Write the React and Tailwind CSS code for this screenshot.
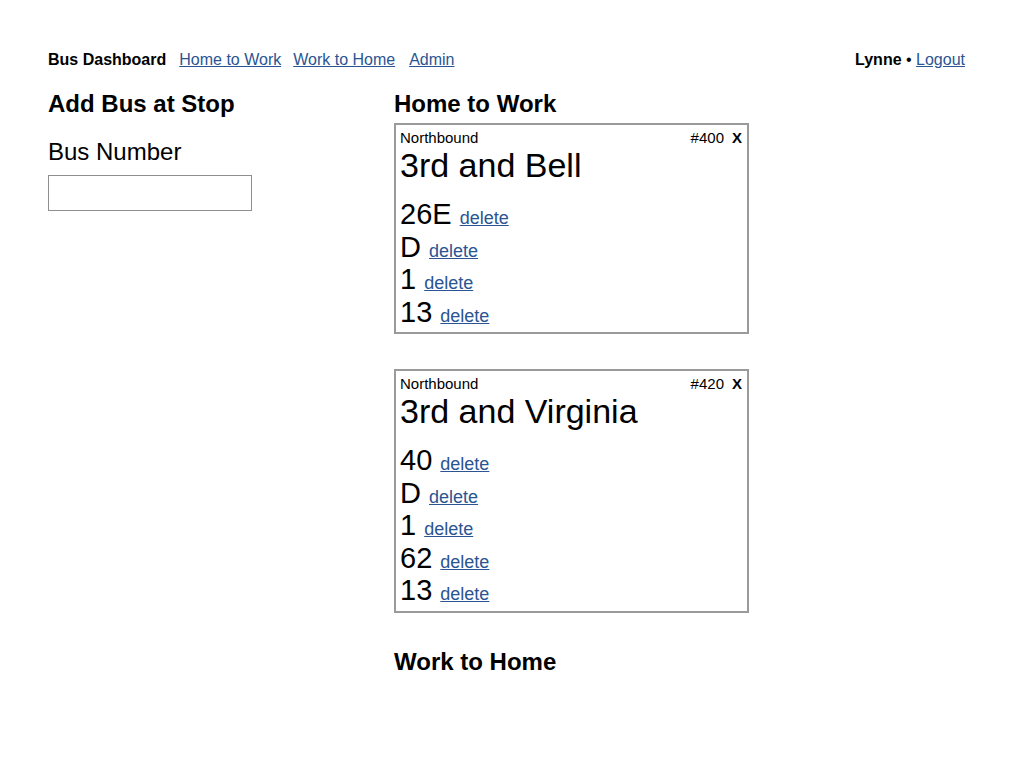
const stops = [
  { id: 400, dir: 'Northbound', name: '3rd and Bell', buses: ['26E', 'D', '1', '13'] },
  { id: 420, dir: 'Northbound', name: '3rd and Virginia', buses: ['40', 'D', '1', '62', '13'] },
];

function StopCard({ stop }) {
  return (
    <div className="border-2 border-[#9a9a9a] px-[4px] pt-[4px] pb-[4px] mb-[35px]">
      <div className="flex justify-between text-[15px] leading-[18px]">
        <span>{stop.dir}</span>
        <span>
          #{stop.id}
          <button className="ml-[8px] font-bold mr-[1px]">X</button>
        </span>
      </div>
      <div className="text-[34px] leading-[36px]">{stop.name}</div>
      <ul className="mt-[15px]">
        {stop.buses.map((bus, i) => (
          <li key={i} className="text-[29px] leading-[32.5px] h-[32.5px]">
            {bus}{' '}
            <a href="#" className="text-[18px] leading-none text-[#2a5592] underline">delete</a>
          </li>
        ))}
      </ul>
    </div>
  );
}

export default function App() {
  return (
    <div className="min-h-screen bg-white text-black pl-[48px] pr-[59px] pt-[51px] font-['Liberation_Sans',Arial,sans-serif]">
      <nav className="flex justify-between text-[16px] leading-[18px]">
        <div className="flex">
          <span className="font-bold">Bus Dashboard</span>
          <a href="#" className="ml-[13px] text-[#2a5592] underline">Home to Work</a>
          <a href="#" className="ml-[12px] text-[#2a5592] underline">Work to Home</a>
          <a href="#" className="ml-[14px] text-[#2a5592] underline">Admin</a>
        </div>
        <div>
          <span className="font-bold">Lynne</span> • <a href="#" className="text-[#2a5592] underline">Logout</a>
        </div>
      </nav>

      <div className="flex mt-[21px]">
        <div className="w-[346px] shrink-0">
          <h2 className="text-[24px] leading-[28px] font-bold">Add Bus at Stop</h2>
          <label className="block mt-[20px] text-[24px] leading-[28px]">Bus Number</label>
          <input type="text" className="mt-[9px] w-[204px] h-[36px] border border-[#8f8f8f] px-2 text-[16px]" />
        </div>
        <div className="w-[355px]">
          <h2 className="text-[24px] leading-[28px] font-bold mb-[5px]">Home to Work</h2>
          {stops.map((s) => (
            <StopCard key={s.id} stop={s} />
          ))}
          <h2 className="text-[24px] leading-[28px] font-bold">Work to Home</h2>
        </div>
      </div>
    </div>
  );
}
